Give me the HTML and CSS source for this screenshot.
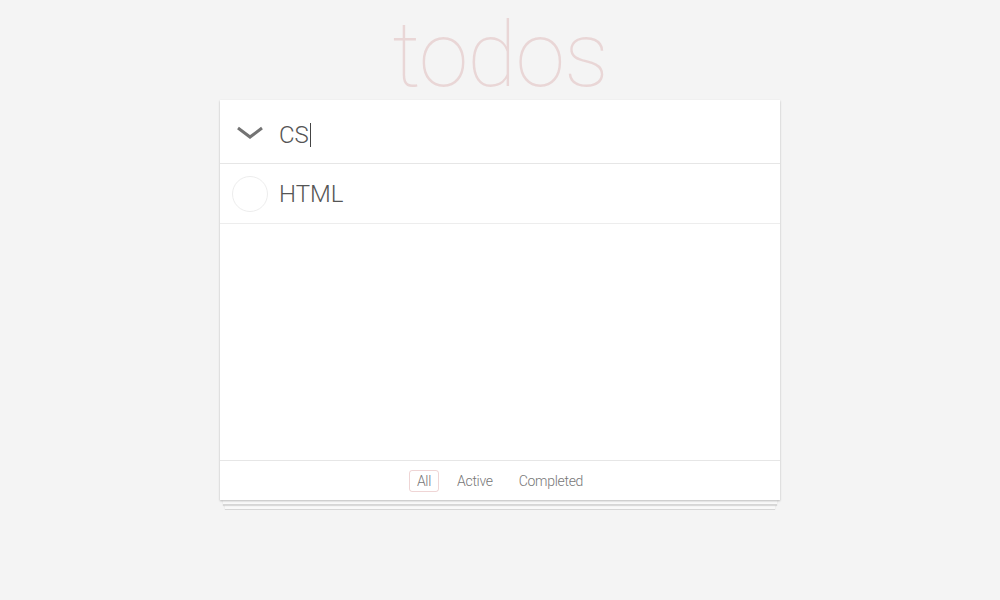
FILE: index.html
```html
<!DOCTYPE html>
<html lang="en">
<head>
<meta charset="utf-8">
<title>todos</title>
<link rel="stylesheet" href="styles.css">
</head>
<body>
<div class="page">
  <h1 class="title">todos</h1>
  <section class="app">
    <header class="header">
      <span class="toggle-all">
        <svg width="28" height="14" viewBox="0 0 28 14"><polyline points="2,2 14,11 26,2" fill="none" stroke="#737373" stroke-width="3"/></svg>
      </span>
      <div class="new-todo">CS<span class="caret"></span></div>
    </header>
    <ul class="list">
      <li class="item">
        <span class="check"></span>
        <span class="label">HTML</span>
      </li>
    </ul>
    <footer class="footer">
      <ul class="filters">
        <li><a class="filter selected">All</a></li>
        <li><a class="filter">Active</a></li>
        <li><a class="filter">Completed</a></li>
      </ul>
    </footer>
  </section>
  <div class="sheet sheet-1"></div>
  <div class="sheet sheet-2"></div>
</div>
</body>
</html>
```
FILE: styles.css
```css
* { box-sizing: border-box; }
html, body { margin: 0; padding: 0; }
body {
  background: #f4f4f4;
  font-family: Roboto, "Liberation Sans", Arial, sans-serif;
  font-weight: 300;
  color: #4d4d4d;
}
.page {
  width: 560px;
  margin: 0 auto;
}
.title {
  margin: 0;
  height: 100px;
  text-align: center;
  font-size: 90px;
  font-weight: 100;
  line-height: 100px;
  padding-top: 6px;
  color: rgba(175, 47, 47, 0.15);
  letter-spacing: -1px;
}
.app {
  position: relative;
  z-index: 3;
  background: #fff;
  height: 400px;
  display: flex;
  flex-direction: column;
  box-shadow: 0 1px 2px rgba(0,0,0,0.25);
}
.header {
  height: 64px;
  display: flex;
  align-items: center;
  border-bottom: 1px solid #e6e6e6;
}
.toggle-all {
  width: 59px;
  display: flex;
  justify-content: center;
  padding-top: 3px;
}
.toggle-all svg { display: block; }
.new-todo {
  font-size: 24px;
  line-height: 34px;
  color: #555;
  display: flex;
  align-items: center;
  margin-top: 6px;
}
.caret {
  display: inline-block;
  width: 1px;
  height: 24px;
  background: #444;
  margin-left: 1px;
}
.list {
  list-style: none;
  margin: 0;
  padding: 0;
  flex: 1;
}
.item {
  height: 60px;
  display: flex;
  align-items: center;
  border-bottom: 1px solid #ededed;
}
.check {
  width: 36px;
  height: 36px;
  border: 1px solid #ededed;
  border-radius: 50%;
  margin-left: 12px;
  margin-right: 11px;
}
.label {
  font-size: 24px;
  color: #555;
  margin-top: 1px;
}
.footer {
  height: 40px;
  border-top: 1px solid #e6e6e6;
  display: flex;
  align-items: center;
  justify-content: center;
}
.filters {
  list-style: none;
  margin: 0;
  padding: 0;
  display: flex;
  gap: 10px;
}
.filter {
  display: block;
  font-size: 14px;
  line-height: 20px;
  color: #777;
  padding: 0 7px;
  border: 1px solid transparent;
  border-radius: 3px;
  letter-spacing: -0.3px;
}
.filter.selected {
  border-color: rgba(175, 47, 47, 0.2);
}
.sheet {
  height: 5px;
  background: #f9f9f9;
  border-bottom: 1px solid #d6d6d6;
  box-shadow: 0 1px 1px rgba(0,0,0,0.12);
}
.sheet-1 {
  position: relative;
  z-index: 2;
  margin: 0 3px;
}
.sheet-2 {
  position: relative;
  z-index: 1;
  margin: 0 5px;
}
```
